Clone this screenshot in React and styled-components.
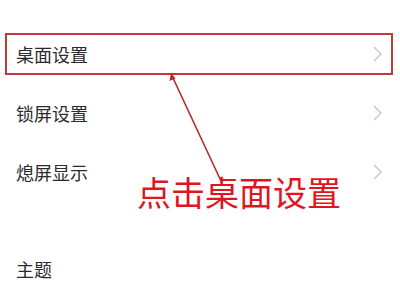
import React from "react";
import styled, { createGlobalStyle } from "styled-components";

const GlobalStyle = createGlobalStyle`
  html, body {
    margin: 0;
    padding: 0;
    background: #fff;
  }
  body {
    font-family: "Noto Sans CJK SC", "Noto Sans", sans-serif;
  }
`;

const Page = styled.div`
  position: relative;
  width: 400px;
  height: 300px;
  overflow: hidden;
  background: #fff;
  padding-top: 24px;
  box-sizing: border-box;
`;

const Row = styled.div`
  position: relative;
  height: 59px;
  display: flex;
  align-items: center;
  justify-content: space-between;
  padding: 0 18px 0 16px;
  margin-top: ${(p) => (p.gap ? `${p.gap}px` : "0")};
  font-size: 18px;
  color: #2b2b2b;
  ${(p) =>
    p.highlight &&
    `
    &::after {
      content: "";
      position: absolute;
      left: 5px;
      right: 7px;
      top: 9px;
      bottom: 8px;
      border: 2px solid #c23a3c;
      pointer-events: none;
    }
  `}
`;

const Label = styled.span`
  line-height: 1;
`;

const Chevron = styled.svg`
  width: 9px;
  height: 16px;
  flex: none;
`;

const Callout = styled.div`
  position: absolute;
  left: 137px;
  top: 172px;
  font-size: 34px;
  line-height: 1.2;
  color: #e1151c;
`;

const Arrow = styled.svg`
  position: absolute;
  left: 0;
  top: 0;
  width: 400px;
  height: 300px;
  pointer-events: none;
`;

const items = [
  { label: "桌面设置", arrow: true, highlight: true },
  { label: "锁屏设置", arrow: true },
  { label: "熄屏显示", arrow: true },
  { label: "主题", arrow: false, gap: 38 },
];

export default function App() {
  return (
    <Page>
      <GlobalStyle />
      {items.map((it) => (
        <Row key={it.label} highlight={it.highlight} gap={it.gap}>
          <Label>{it.label}</Label>
          {it.arrow && (
            <Chevron viewBox="0 0 9 16">
              <path d="M1 1 L8 8 L1 15" fill="none" stroke="#c4c4c4" strokeWidth="1.3" />
            </Chevron>
          )}
        </Row>
      ))}
      <Callout>点击桌面设置</Callout>
      <Arrow viewBox="0 0 400 300">
        <line x1="221" y1="181" x2="173" y2="78" stroke="#b8282a" strokeWidth="1.6" />
        <path d="M171 73 L169.5 81 L175.5 78.5 Z" fill="#b8282a" />
      </Arrow>
    </Page>
  );
}
